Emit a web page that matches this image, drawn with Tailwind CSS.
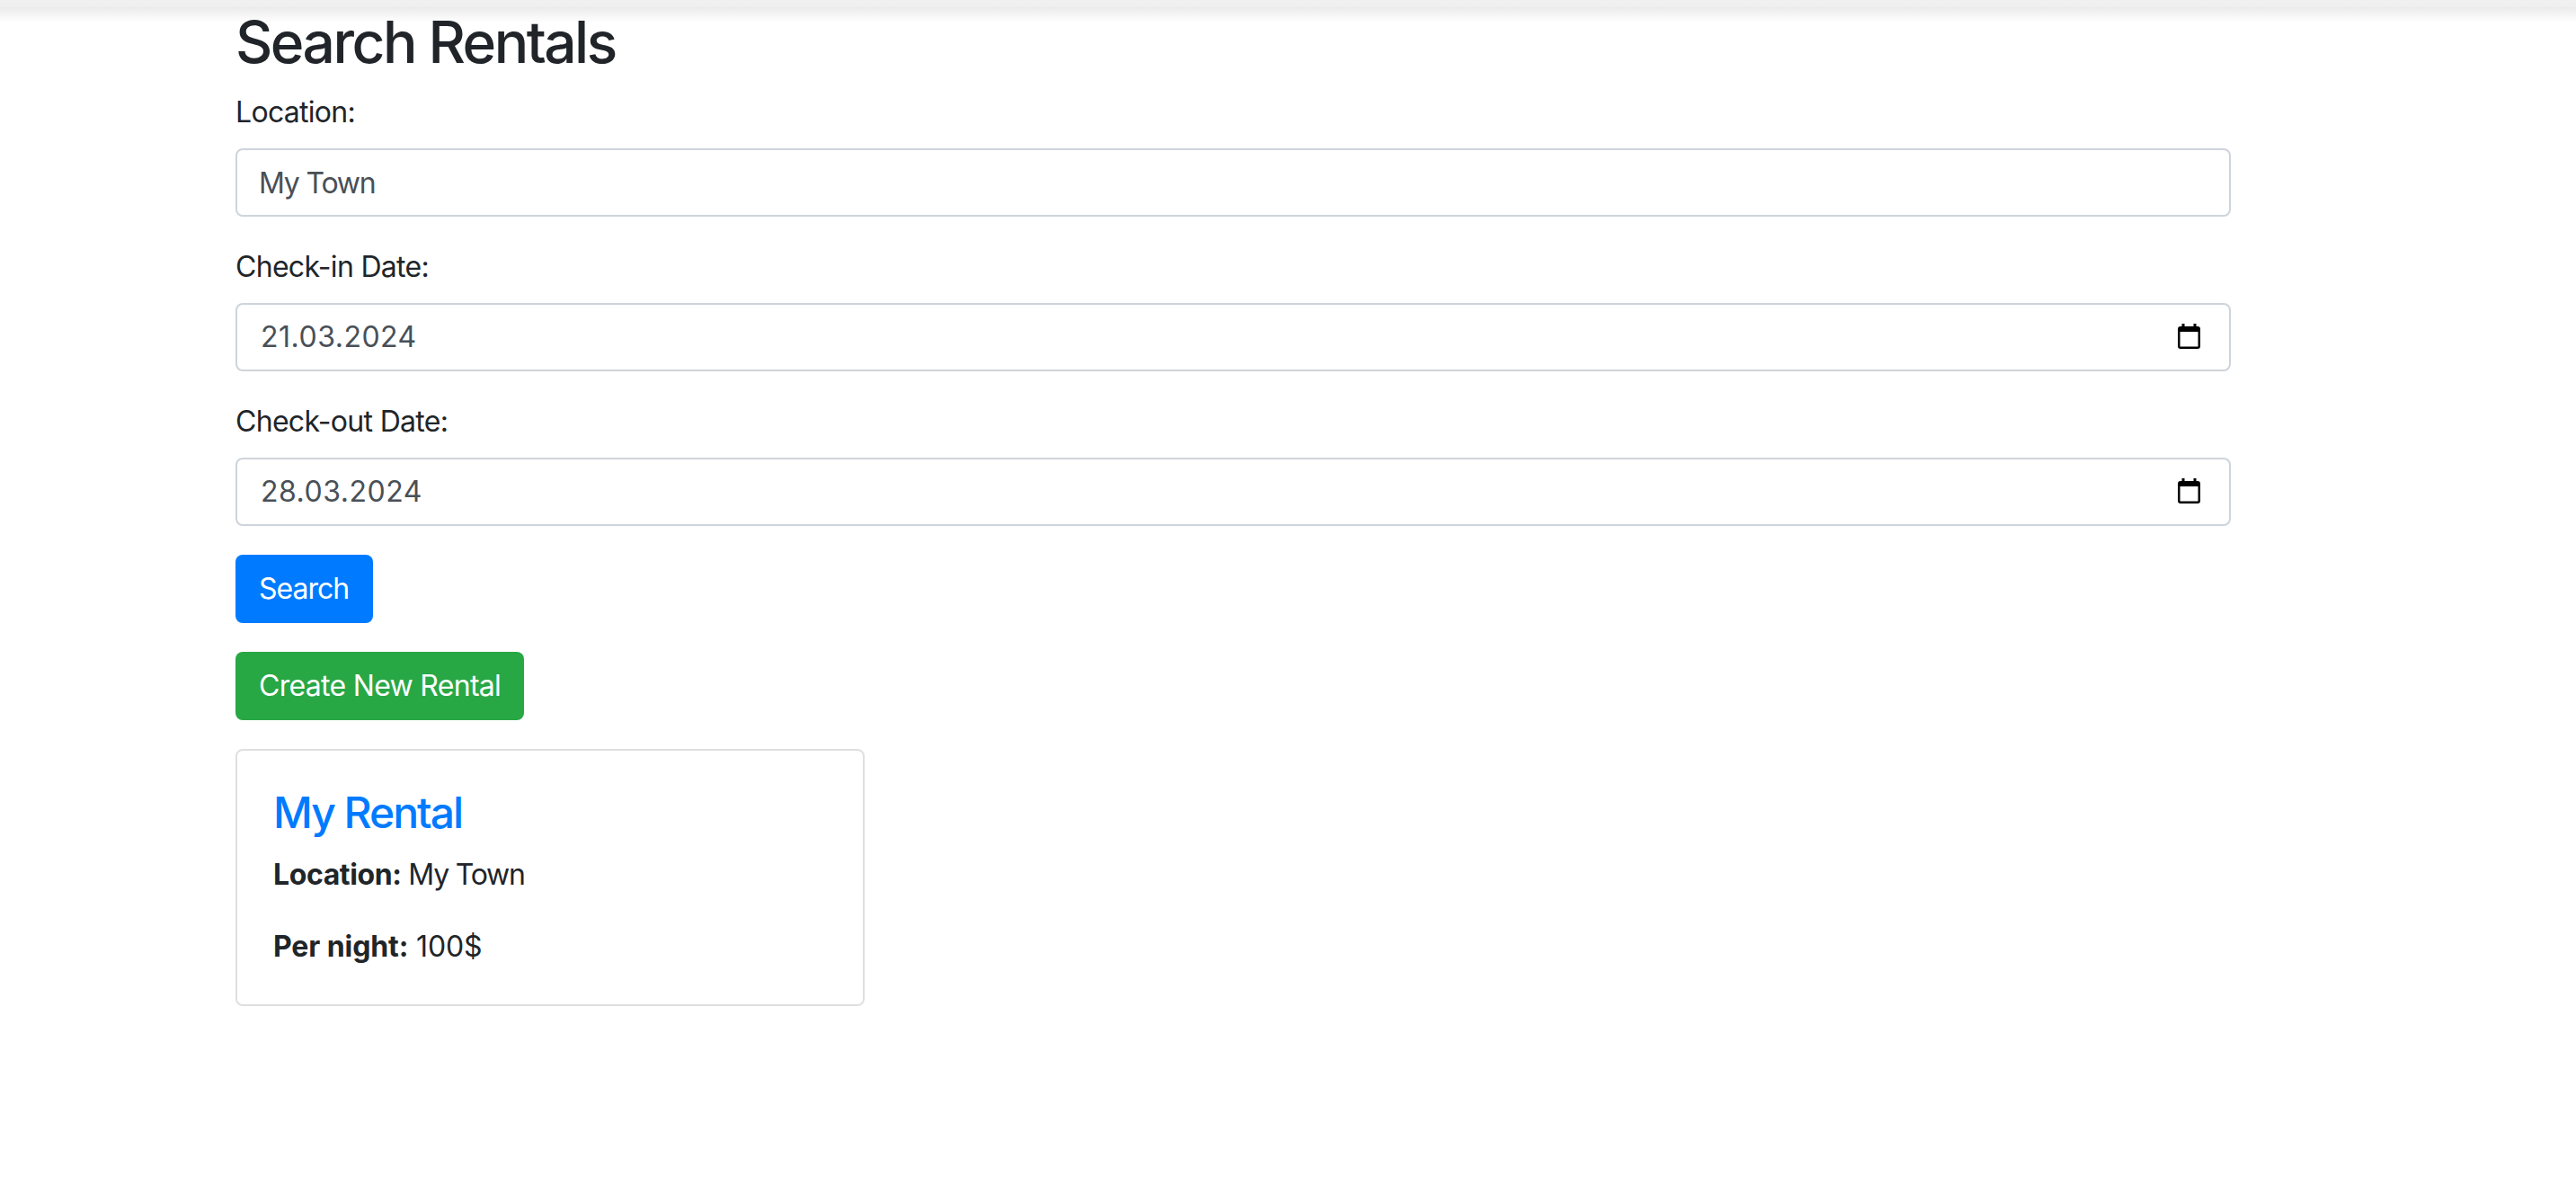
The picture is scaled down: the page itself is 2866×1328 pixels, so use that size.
<!DOCTYPE html>
<html lang="en">
<head>
  <meta charset="UTF-8" />
  <title>Search Rentals</title>
  <script src="https://cdn.jsdelivr.net/npm/@tailwindcss/browser@4"></script>
</head>
<body class="bg-white text-[#212529] font-['Inter',sans-serif] min-h-screen">
  <div class="h-[8px] bg-[#f0f0f0]"></div>
  <div class="h-[17px] -mb-[17px] bg-gradient-to-b from-[#ebebeb] to-white"></div>

  <div class="relative pl-[262px] w-[2482px]">
    <h2 class="text-[64px] leading-[77px] font-medium tracking-[-2.5px] mb-[16px]">Search Rentals</h2>

    <form>
      <div class="mb-[32px]">
        <label class="block text-[32px] leading-[48px] tracking-[-0.7px] mb-[16px]">Location:</label>
        <input type="text" value="My Town" class="block w-full h-[76px] px-[24px] text-[32px] tracking-[-1.2px] text-[#495057] border-2 border-[#ced4da] rounded-[8px]" />
      </div>
      <div class="mb-[32px]">
        <label class="block text-[32px] leading-[48px] tracking-[-0.7px] mb-[16px]">Check-in Date:</label>
        <div class="flex items-center justify-between h-[76px] pl-[26px] pr-[32px] text-[32px] text-[#495057] tracking-[0.5px] border-2 border-[#ced4da] rounded-[8px]">
          <span>21.03.2024</span>
          <svg class="w-[25px] h-[28px] mb-[3px]" viewBox="0 0 25 28"><path fill="#000" fill-rule="evenodd" d="M4.5 0h3v3h10V0h3v3H22a3 3 0 0 1 3 3v19a3 3 0 0 1-3 3H3a3 3 0 0 1-3-3V6a3 3 0 0 1 3-3h1.5zM2.5 9v16.5h20V9z"/></svg>
        </div>
      </div>
      <div class="mb-[32px]">
        <label class="block text-[32px] leading-[48px] tracking-[-0.7px] mb-[16px]">Check-out Date:</label>
        <div class="flex items-center justify-between h-[76px] pl-[26px] pr-[32px] text-[32px] text-[#495057] tracking-[0.5px] border-2 border-[#ced4da] rounded-[8px]">
          <span>28.03.2024</span>
          <svg class="w-[25px] h-[28px] mb-[3px]" viewBox="0 0 25 28"><path fill="#000" fill-rule="evenodd" d="M4.5 0h3v3h10V0h3v3H22a3 3 0 0 1 3 3v19a3 3 0 0 1-3 3H3a3 3 0 0 1-3-3V6a3 3 0 0 1 3-3h1.5zM2.5 9v16.5h20V9z"/></svg>
        </div>
      </div>
      <button type="button" class="block w-[153px] h-[76px] px-[26px] mb-[32px] text-[32px] tracking-[-1px] text-white text-left bg-[#007bff] rounded-[8px]">Search</button>
    </form>

    <button type="button" class="block w-[321px] h-[76px] px-[26px] mb-[32px] text-[32px] tracking-[-0.7px] text-white text-left whitespace-nowrap bg-[#28a745] rounded-[8px]">Create New Rental</button>

    <div class="w-[700px] p-[40px] border-2 border-black/[.125] rounded-[8px]">
      <h4 class="text-[48px] leading-[57.6px] font-medium tracking-[-2px] mb-[16px] text-[#007bff]">My Rental</h4>
      <p class="text-[32px] leading-[48px] tracking-[-1.2px] mb-[32px]"><strong class="font-bold tracking-[-0.4px]">Location:</strong> My Town</p>
      <p class="text-[32px] leading-[48px] tracking-[-0.2px]"><strong class="font-bold tracking-[-0.1px]">Per night:</strong> 100$</p>
    </div>
  </div>
</body>
</html>
